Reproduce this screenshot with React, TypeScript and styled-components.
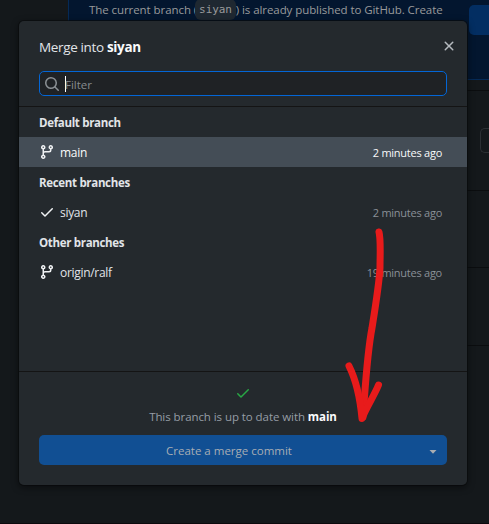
import React from "react";
import styled, { createGlobalStyle } from "styled-components";

const GlobalStyle = createGlobalStyle`
  *, *::before, *::after { box-sizing: border-box; }
  html, body { margin: 0; padding: 0; overflow: hidden; background: #14181b; }
  body { font-family: "Open Sans", "Noto Sans", sans-serif; font-size: 11.5px; color: #e1e4e8; }
`;

const Window = styled.div`
  position: relative;
  width: 489px;
  height: 524px;
  overflow: hidden;
  background: #14181b;
  border-bottom: 1px solid #0c090d;
`;

const Page = styled.div`
  display: flex;
  flex-direction: column;
  height: 100%;
`;

const Banner = styled.div`
  display: flex;
  justify-content: space-between;
  height: 80px;
  margin-left: 68px;
  padding-left: 20px;
  background: #03162f;
  border-left: 1px solid #052a57;
  border-bottom: 1px solid #052a57;
`;

const BannerText = styled.div`
  display: flex;
  align-items: center;
  height: 18px;
  color: #999a9b;
  white-space: pre;
  letter-spacing: -0.07px;
`;

const BannerButton = styled.div`
  flex: none;
  width: 20px;
  height: 30px;
  margin-top: 5px;
  border-radius: 5px 0 0 5px;
  background: #032e62;
`;

const Code = styled.code`
  display: inline-flex;
  align-items: center;
  height: 21px;
  margin: 0 0 0 -2px;
  padding: 0 4px;
  border-radius: 6px;
  background: #1f2831;
  font-family: "DejaVu Sans Mono", monospace;
  font-size: 11px;
  letter-spacing: -0.1px;
`;

const PageSection = styled.div<{ $height: number }>`
  display: flex;
  align-items: center;
  justify-content: flex-end;
  height: ${(p) => p.$height}px;
  margin-left: 68px;
  border-bottom: 1px solid #0b0d0f;
`;

const PageButton = styled.div`
  width: 9px;
  height: 25px;
  border: 1px solid #2b2f33;
  border-right: 0;
  border-radius: 5px 0 0 5px;
`;

const Dialog = styled.section`
  position: absolute;
  top: 21px;
  left: 19px;
  width: 448px;
  height: 464px;
  display: flex;
  flex-direction: column;
  overflow: hidden;
  border-radius: 5px;
  background: #24292d;
`;

const Shadow = styled.div`
  position: absolute;
  top: 21px;
  left: 19px;
  width: 448px;
  height: 464px;
  border-radius: 5px;
  box-shadow: 0 2px 7px rgba(5, 5, 6, 0.65), 0 0 0 1px rgba(12, 14, 16, 0.7);
`;

const Header = styled.header`
  display: flex;
  align-items: flex-start;
  justify-content: space-between;
  height: 50px;
  padding: 17px 10px 0 20px;
`;

const Title = styled.h1`
  margin: 0;
  font-size: 13.5px;
  line-height: 19px;
  font-weight: 400;
  letter-spacing: -0.35px;
  white-space: pre;
`;

const Strong = styled.strong`
  font-weight: 700;
  color: #fafbfc;
`;

const FilterArea = styled.div`
  height: 36px;
  padding: 0 20px;
  border-bottom: 1px solid #141414;
`;

const FilterBox = styled.div`
  display: flex;
  align-items: center;
  height: 25px;
  padding-left: 4px;
  border: 1px solid #0366d6;
  border-radius: 5px;
  background: #1f2225;
  color: #868a8e;
`;

const Caret = styled.span`
  width: 1px;
  height: 16px;
  margin-left: 5px;
  margin-right: -1px;
  background: #fff;
`;

const Placeholder = styled.span`
  padding-top: 2px;
  line-height: 16px;
`;

const BranchList = styled.div`
  height: 265px;
  border-bottom: 1px solid #141414;
`;

const GroupTitle = styled.h2`
  height: 30px;
  margin: 0;
  padding-left: 20px;
  font-size: 11.5px;
  line-height: 31px;
  font-weight: 700;
  letter-spacing: -0.32px;
`;

const BranchRow = styled.div<{ $selected?: boolean }>`
  display: flex;
  align-items: center;
  height: 30px;
  padding: 0 25px 0 20px;
  background: ${(p) => (p.$selected ? "#444d56" : "transparent")};
  color: ${(p) => (p.$selected ? "#fafbfc" : "#e1e4e8")};
`;

const BranchName = styled.span`
  flex: 1;
  padding-top: 1px;
  margin-left: 5px;
  font-size: 12px;
  letter-spacing: -0.3px;
`;

const Age = styled.time<{ $selected?: boolean }>`
  font-size: 11px;
  letter-spacing: -0.25px;
  color: ${(p) => (p.$selected ? "#fafbfc" : "#8a9097")};
`;

const Footer = styled.footer`
  flex: 1;
  display: flex;
  flex-direction: column;
  align-items: center;
  padding: 13px 20px 0;
  color: #959da5;
`;

const Status = styled.p`
  height: 20px;
  margin: 6px 0 8px;
  line-height: 20px;
  letter-spacing: -0.07px;
  white-space: pre;
`;

const MergeButton = styled.div`
  display: flex;
  align-items: center;
  width: 100%;
  height: 30px;
  border-radius: 5px;
  background: #114f93;
  color: #a7adb4;
`;

const MergeLabel = styled.span`
  flex: 1;
  text-align: center;
`;

const MergeMenu = styled.span`
  display: flex;
  align-items: center;
  justify-content: center;
  width: 28px;
  height: 30px;
  padding-top: 3px;
`;

const Glyph = styled.svg<{ $color: string }>`
  display: block;
  flex: none;
  fill: ${(p) => p.$color};
`;

const Annotation = styled.svg`
  position: absolute;
  top: 0;
  left: 0;
  fill: none;
  stroke: #e81b1b;
  stroke-linecap: round;
  stroke-linejoin: round;
`;

const paths = {
  branch:
    "M9.5 3.25a2.25 2.25 0 1 1 3 2.122V6A2.5 2.5 0 0 1 10 8.5H6a1 1 0 0 0-1 1v1.128a2.251 2.251 0 1 1-1.5 0V5.372a2.25 2.25 0 1 1 1.5 0v1.836A2.493 2.493 0 0 1 6 7h4a1 1 0 0 0 1-1v-.628A2.25 2.25 0 0 1 9.5 3.25Zm-6 0a.75.75 0 1 0 1.5 0 .75.75 0 0 0-1.5 0Zm8.25-.75a.75.75 0 1 0 0 1.5.75.75 0 0 0 0-1.5ZM4.25 12a.75.75 0 1 0 0 1.5.75.75 0 0 0 0-1.5Z",
  check:
    "M13.78 4.22a.75.75 0 0 1 0 1.06l-7.25 7.25a.75.75 0 0 1-1.06 0L2.22 9.28a.751.751 0 0 1 .018-1.042.751.751 0 0 1 1.042-.018L6 10.94l6.72-6.72a.75.75 0 0 1 1.06 0Z",
  search:
    "M10.68 11.74a6 6 0 0 1-7.922-8.982 6 6 0 0 1 8.982 7.922l3.04 3.04a.749.749 0 0 1-.326 1.275.749.749 0 0 1-.734-.215ZM11.5 7a4.499 4.499 0 1 0-8.997 0A4.499 4.499 0 0 0 11.5 7Z",
  close:
    "M3.72 3.72a.75.75 0 0 1 1.06 0L8 6.94l3.22-3.22a.75.75 0 1 1 1.06 1.06L9.06 8l3.22 3.22a.75.75 0 1 1-1.06 1.06L8 9.06l-3.22 3.22a.75.75 0 0 1-1.06-1.06L6.94 8 3.72 4.78a.75.75 0 0 1 0-1.06Z",
  caret: "M4.5 6h7L8 9.8Z",
};

function Icon({ name, color }: { name: keyof typeof paths; color: string }) {
  return (
    <Glyph $color={color} width="16" height="16" viewBox="0 0 16 16">
      <path d={paths[name]} />
    </Glyph>
  );
}

const groups = [
  { title: "Default branch", name: "main", age: "2 minutes ago", icon: "branch", selected: true },
  { title: "Recent branches", name: "siyan", age: "2 minutes ago", icon: "check", selected: false },
  { title: "Other branches", name: "origin/ralf", age: "19 minutes ago", icon: "branch", selected: false },
] as const;

export default function App() {
  return (
    <Window>
      <GlobalStyle />
      <Page>
        <Banner>
          <BannerText>
            The current branch (<Code>siyan</Code>) is already published to GitHub. Create
          </BannerText>
          <BannerButton />
        </Banner>
        <PageSection $height={11} />
        <PageSection $height={100}>
          <PageButton />
        </PageSection>
        <PageSection $height={77} />
        <PageSection $height={78} />
      </Page>
      <Shadow />
      <Dialog>
        <Header>
          <Title>
            Merge into <Strong>siyan</Strong>
          </Title>
          <Icon name="close" color="#b5babf" />
        </Header>
        <FilterArea>
          <FilterBox>
            <Icon name="search" color="#8b9094" />
            <Caret />
            <Placeholder>Filter</Placeholder>
          </FilterBox>
        </FilterArea>
        <BranchList>
          {groups.map((g) => (
            <React.Fragment key={g.title}>
              <GroupTitle>{g.title}</GroupTitle>
              <BranchRow $selected={g.selected}>
                <Icon name={g.icon} color="#f0f2f4" />
                <BranchName>{g.name}</BranchName>
                <Age $selected={g.selected}>{g.age}</Age>
              </BranchRow>
            </React.Fragment>
          ))}
        </BranchList>
        <Footer>
          <Icon name="check" color="#28a745" />
          <Status>
            This branch is up to date with <Strong>main</Strong>
          </Status>
          <MergeButton>
            <MergeLabel>Create a merge commit</MergeLabel>
            <MergeMenu>
              <Icon name="caret" color="#a9adb2" />
            </MergeMenu>
          </MergeButton>
        </Footer>
      </Dialog>
      <Annotation width="489" height="524" viewBox="0 0 489 524">
        <path
          strokeWidth="7"
          d="M379 232C381 240 380 254 380 268C379 285 376 303 372 328C367 354 365.500 385 363 417"
        />
        <path strokeWidth="7" d="M349 366C356 380 360 397 362 418.500C366 408 374 396 378.500 385" />
      </Annotation>
    </Window>
  );
}
